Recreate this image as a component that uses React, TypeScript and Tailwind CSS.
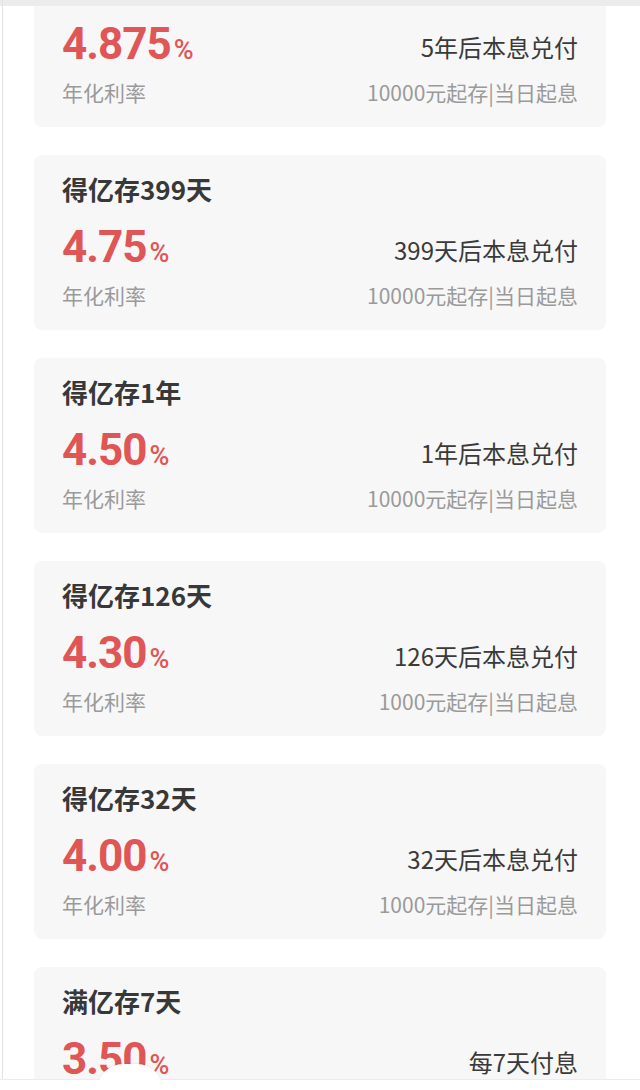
import React from "react";

const products = [
  { name: "得亿存5年", rate: "4.875", payout: "5年后本息兑付", min: "10000元起存|当日起息" },
  { name: "得亿存399天", rate: "4.75", payout: "399天后本息兑付", min: "10000元起存|当日起息" },
  { name: "得亿存1年", rate: "4.50", payout: "1年后本息兑付", min: "10000元起存|当日起息" },
  { name: "得亿存126天", rate: "4.30", payout: "126天后本息兑付", min: "1000元起存|当日起息" },
  { name: "得亿存32天", rate: "4.00", payout: "32天后本息兑付", min: "1000元起存|当日起息" },
  { name: "满亿存7天", rate: "3.50", payout: "每7天付息", min: "1000元起存|当日起息" },
];

const ProductCard = ({ item }: { item: (typeof products)[number] }) => {
  return (
    <div className="h-[175px] overflow-hidden rounded-[8px] bg-[#f7f7f7] px-[28px] pt-[19px]">
      <div className="h-[30px] text-[26px] font-bold leading-[30px] text-[#383838]">{item.name}</div>
      <div className="mt-[21px] flex h-[44px] items-end justify-between">
        <div className="h-[44px] font-['Roboto','Noto_Sans_CJK_SC',sans-serif] text-[44px] font-bold leading-[44px] tracking-[-1px] text-[#e05555]">
          {item.rate}
          <span className="ml-[3px] text-[27px] font-medium tracking-normal">%</span>
        </div>
        <div className="mb-[5px] h-[28px] text-[24px] leading-[28px] text-[#3a3a3a]">{item.payout}</div>
      </div>
      <div className="mt-[12px] flex h-[28px] justify-between text-[21px] leading-[28px] text-[#9a9a9a]">
        <span>年化利率</span>
        <span>{item.min}</span>
      </div>
    </div>
  );
};

export default function App() {
  return (
    <div className="relative h-[1090px] w-[640px] overflow-hidden bg-white font-['Noto_Sans_CJK_SC','Noto_Sans',sans-serif]">
      <div className="-mt-[48px] flex flex-col gap-[28px] pl-[34px] pr-[34px]">
        {products.map((item) => (
          <ProductCard key={item.name} item={item} />
        ))}
      </div>

      {/* scroll chrome over the list */}
      <div className="absolute left-0 top-0 h-[6px] w-full bg-[#ececec]" />
      <div className="absolute bottom-0 left-[2px] top-0 w-px bg-[#e2e2e2]" />
      <div className="absolute bottom-0 left-0 h-[11px] w-full border-t border-[#ececec] bg-white" />
      <div className="absolute bottom-0 left-[97px] h-[26px] w-[66px] rounded-t-full bg-white shadow-[0_-1px_2px_rgba(0,0,0,0.05)]" />
      <div className="absolute bottom-0 left-[90px] h-[10px] w-[80px] bg-white" />
    </div>
  );
}
